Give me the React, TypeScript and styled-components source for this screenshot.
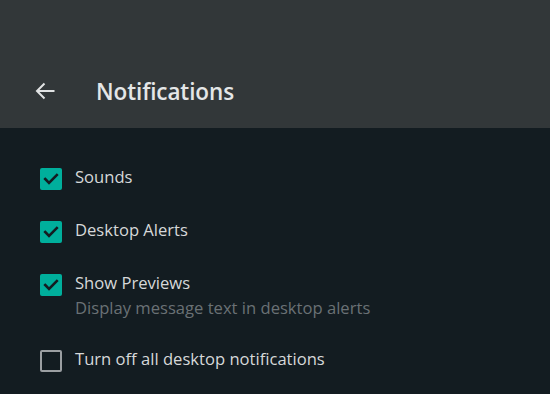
import React from "react";
import styled, { createGlobalStyle } from "styled-components";

const Global = createGlobalStyle`
  html, body { margin: 0; padding: 0; background: #131c21; }
  body { font-family: "Open Sans", "Noto Sans", sans-serif; }
  * { box-sizing: border-box; }
`;

const Page = styled.div`
  width: 550px;
  height: 394px;
  background: #131c21;
  overflow: hidden;
`;

const Header = styled.header`
  height: 128px;
  background: #323739;
  display: flex;
  align-items: flex-end;
`;

const HeaderBar = styled.div`
  height: 72px;
  width: 100%;
  display: flex;
  align-items: center;
  padding-left: 35px;
  padding-bottom: 2px;
`;

const BackButton = styled.button`
  background: none;
  border: 0;
  padding: 0;
  width: 20px;
  height: 18px;
  display: flex;
  color: #e1e3e4;
  cursor: pointer;
`;

const Title = styled.h1`
  margin: 0 0 0 41px;
  font-size: 22.5px;
  font-weight: 600;
  color: #e4e6e7;
  letter-spacing: -0.1px;
`;

const Body = styled.div`
  padding: 40px 0 0 40px;
  display: flex;
  flex-direction: column;
  gap: 31px;
`;

const Row = styled.label`
  display: flex;
  align-items: flex-start;
  gap: 13px;
  cursor: pointer;
`;

const Box = styled.span<{ $checked: boolean }>`
  flex: none;
  width: 22px;
  height: 22px;
  border-radius: 2px;
  display: flex;
  align-items: center;
  justify-content: center;
  background: ${(p) => (p.$checked ? "#00af9c" : "transparent")};
  border: ${(p) => (p.$checked ? "none" : "2px solid #9b9fa2")};
`;

const TextCol = styled.div`
  display: flex;
  flex-direction: column;
  margin-top: -2px;
`;

const Label = styled.span`
  font-size: 16.6px;
  line-height: 22px;
  color: #d6d8d9;
`;

const Sub = styled.span`
  margin-top: 3px;
  font-size: 16.6px;
  line-height: 22px;
  color: #6a7175;
`;

const Check = () => (
  <svg width="22" height="22" viewBox="0 0 22 22">
    <path d="M5.2 11 L9 14.8 L16.8 7" fill="none" stroke="#131c21" strokeWidth="2.6" strokeLinecap="square" />
  </svg>
);

type Item = { label: string; sub?: string; checked: boolean };
const items: Item[] = [
  { label: "Sounds", checked: true },
  { label: "Desktop Alerts", checked: true },
  { label: "Show Previews", sub: "Display message text in desktop alerts", checked: true },
  { label: "Turn off all desktop notifications", checked: false },
];

export default function App() {
  return (
    <Page>
      <Global />
      <Header>
        <HeaderBar>
          <BackButton aria-label="Back">
            <svg width="20" height="18" viewBox="0 0 20 18">
              <path d="M19.5 9H2 M9.5 1.5 L2 9 L9.5 16.5" fill="none" stroke="currentColor" strokeWidth="2" />
            </svg>
          </BackButton>
          <Title>Notifications</Title>
        </HeaderBar>
      </Header>
      <Body>
        {items.map((it) => (
          <Row key={it.label}>
            <Box $checked={it.checked}>{it.checked && <Check />}</Box>
            <TextCol>
              <Label>{it.label}</Label>
              {it.sub && <Sub>{it.sub}</Sub>}
            </TextCol>
          </Row>
        ))}
      </Body>
    </Page>
  );
}
